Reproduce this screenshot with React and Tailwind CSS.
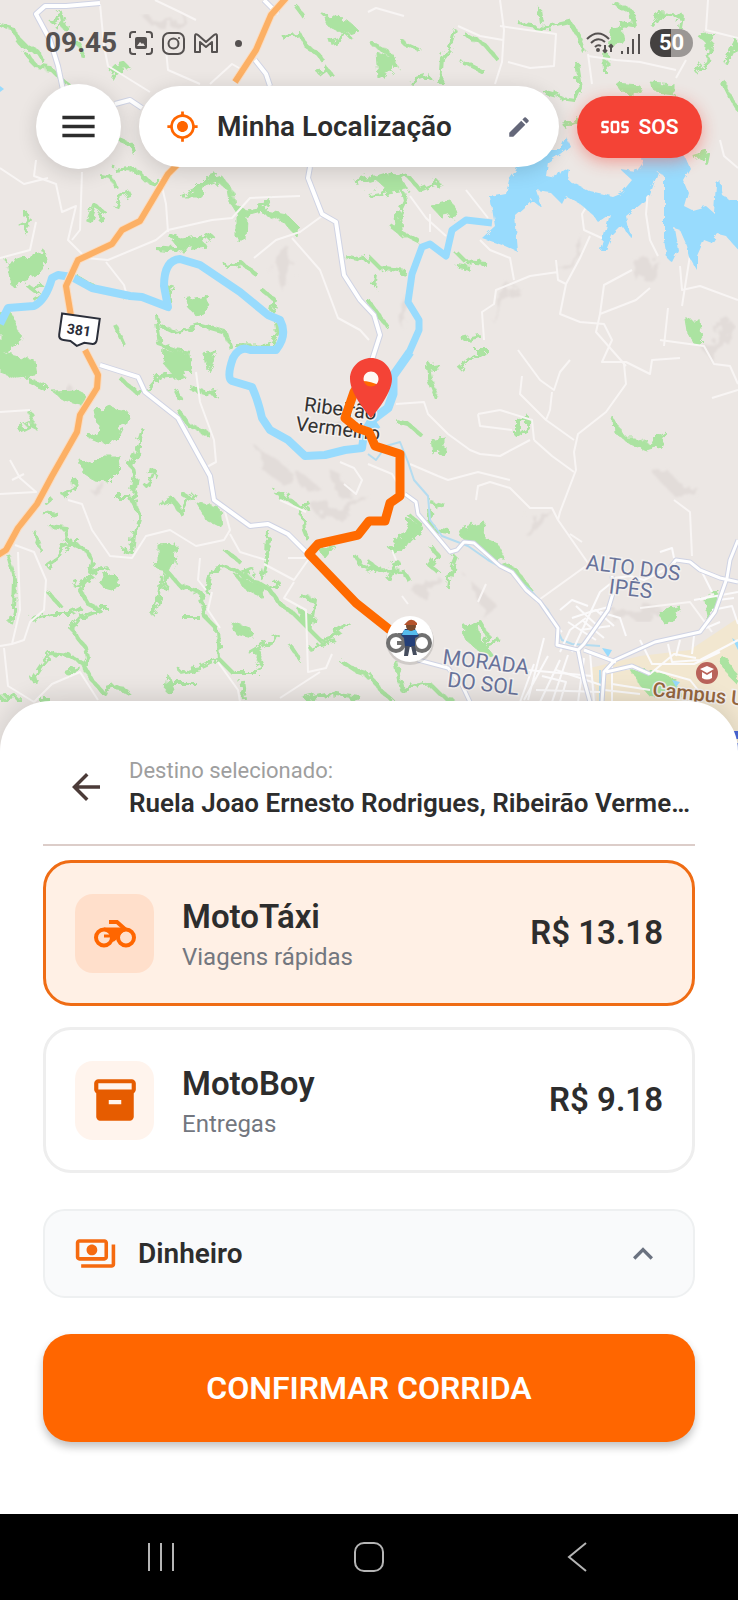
import { useState } from "react";
import {
  MdArrowBack,
  MdEdit,
  MdInventory2,
  MdKeyboardArrowUp,
  MdMenu,
  MdMyLocation,
  MdOutlinePayments,
  MdSos,
} from "react-icons/md";

const rides = [
  { id: "taxi", name: "MotoTáxi", detail: "Viagens rápidas", price: "R$ 13.18" },
  { id: "boy", name: "MotoBoy", detail: "Entregas", price: "R$ 9.18" },
];

// Thin hedges and tree lines
const woods = [
  "M0 25L12 28L18 38L26 46L38 52L44 62M17 40L24 48",
  "M25 52L36 66L50 68L60 78L68 84M36 66L30 60M50 22L62 14L64 22L58 30M62 22L66 30M78 42L84 58",
  "M110 72L116 66L124 64L130 70M118 66L114 80M120 140L132 145L136 155M100 176L112 178L116 188",
  "M114 170L128 168L140 172L145 180L156 184L160 178M118 198L130 192M116 208L120 198M88 222L94 205L104 212L98 220M26 212L28 235M20 226L32 220",
  "M156 248L176 250L186 240L205 240L212 234M168 234L182 240M225 266L240 262L256 274M262 290L275 300L272 312",
  "M76 276L100 290L125 296M28 286L36 292L42 284M34 300L46 292M115 325L124 345M156 315L160 345L175 350L190 352",
  "M160 325L175 332L200 325L225 332L230 348M190 310L205 295L196 305M172 285L168 300M235 345L270 346L278 335L276 322",
  "M122 380L136 392L148 390L160 376L176 374M176 390L182 402M190 388L215 395L214 388M178 410L188 425L210 435",
  "M18 430L30 424L38 428M30 412L34 424M62 495L75 488L74 478M42 512L58 514M45 504L52 498",
  "M144 430L136 455L130 465L136 475L132 500L140 515L134 535L132 552L122 550M114 496L130 496",
  "M146 470L156 472L152 482L146 488M160 505L172 500L182 514L194 492M172 498L180 508M204 508L220 516M182 494L192 500",
  "M275 492L290 500L302 510L311 504M302 510L304 530L308 540M280 500L288 492",
  "M50 526L66 528L68 542L86 550L92 560L90 572L108 568M68 542L60 556L46 566M68 542L80 542",
  "M92 575L80 590L88 604L100 610L80 618L70 630M88 580L74 586M100 608L108 608",
  "M35 532L42 552M8 555L15 580L14 610L11 624M48 592L60 606M32 620L50 614L70 614L82 608",
  "M72 628L76 636L86 648L88 658L84 666L92 680L104 694M84 664L70 656L50 654L42 664L34 676L36 684M104 690L116 686L130 694M66 674L80 668",
  "M155 565L168 572L164 590M162 576L158 602L153 616M168 572L180 586L200 592L206 618L218 630L220 660L232 672L258 672",
  "M206 592L212 570L225 566L250 578L270 590L280 604L292 612L310 630L320 640L332 636L350 624M218 660L200 668L180 672",
  "M182 618L200 618M256 650L262 664L258 670M250 654L280 636M268 530L267 560L262 580M270 588L280 582M310 628L315 600L300 596M240 576L255 570M225 550L240 562",
  "M290 645L300 660M308 648L320 644L336 640M340 660L358 672L370 676M305 700L330 694L360 698M170 684L196 684M242 680L245 700M0 700L20 698M38 700L50 700",
  "M355 555L360 565L369 568M428 362L432 385L438 400M426 368L440 366M458 368L475 355L485 352M396 421L408 424L422 436",
  "M518 420L528 418L528 428L518 436L518 420M430 502L445 506M408 514L420 524M430 510L432 530L450 532",
  "M430 545L438 556L430 566L440 574M456 556L450 572L448 588M368 562L380 570L404 572L410 582M368 572L380 566M388 580L398 560",
  "M464 628L480 622L488 636L480 650L500 640M368 672L380 690L392 700M396 662L402 690L430 684L440 694L455 702M660 616L680 608",
  "M612 2L632 12L634 26L620 24M652 26L660 14L682 16L680 28M520 24L544 28L570 22L578 36L584 52M540 10L542 24",
  "M576 62L580 88L575 100L560 98M545 92L560 96M606 52L607 74M700 36L710 44L708 62L695 72M722 80L732 100L738 110M726 64L738 40",
  "M456 30L450 48L442 58L440 84M464 34L485 45L496 58M460 60L484 72M372 44L390 54L398 70M402 42L420 50M410 82L430 76",
  "M368 180L385 175L410 178L420 190L440 182M400 178L405 200L398 215L400 232L420 242M390 225L402 235M368 195L395 190",
  "M368 256L380 268L406 272M376 275L374 288M368 300L386 325M456 252L466 262L486 264M458 266L470 268M462 340L480 336M474 350L488 350M563 126L580 120",
  "M296 6L305 18M283 38L300 34L306 46L318 54L324 62M318 74L326 68L334 78M330 42L350 35M345 256L370 262M355 182L370 178M694 158L708 154L706 164",
];

// Closed wooded areas
const groves = [
  "M8 262L44 250L47 264L36 276L12 286Z",
  "M0 314L10 312L16 326L22 338L10 352L0 354Z",
  "M0 353L34 360L36 376L18 378L0 372Z",
  "M28 378L48 386L44 390L30 384Z",
  "M52 391L78 390L86 396L82 406L66 402Z",
  "M165 350L190 355L192 372L176 378L164 364Z",
  "M205 355L218 350L207 370Z",
  "M96 412L108 404L116 410L128 412L124 424L118 436L112 444L98 442L88 438L100 430Z",
  "M80 460L92 464L104 456L120 456L122 468L108 482L94 480L82 472Z",
  "M196 502L220 508L222 528L206 520Z",
  "M98 580L112 572L120 580L112 590L104 588Z",
  "M158 545L176 544L174 562L168 574L158 568Z",
  "M318 548L335 546L325 558Z",
  "M232 622L250 628L252 638L236 634Z",
  "M168 674L174 690L166 692Z",
  "M234 574L262 586L264 598L246 590Z",
  "M298 608L314 616L312 630L302 620Z",
  "M230 202L228 190L218 182L206 186L204 196L180 196L194 190L206 178L220 174L232 190L234 204L246 210L258 208L272 196L262 212L240 218Z",
  "M258 208L285 213L298 226L296 236L284 222L264 214Z",
  "M236 216L246 216L245 240L236 240Z",
  "M172 240L200 234L206 246L180 250Z",
  "M186 300L204 296L210 306L196 316Z",
  "M376 52L396 58L392 72L378 78Z",
  "M430 205L450 200L458 214L442 218Z",
  "M372 176L400 176L408 190L390 192Z",
  "M612 28L622 26L624 44L608 46Z",
  "M616 84L640 86L642 94L622 92Z",
  "M650 82L674 84L674 94L656 92Z",
  "M324 16L345 18L358 30L344 34L328 26Z",
  "M686 320L700 320L702 340L696 346L688 332Z",
  "M432 438L444 436L444 450L434 456Z",
  "M613 417L620 430L626 438L634 438L650 444L660 436L666 432L660 446L646 450L630 444L614 432Z",
  "M410 520L424 528L410 540L402 552L390 550L398 540Z",
  "M460 530L485 522L484 538L498 544L504 558L492 558L476 546L462 538Z",
  "M498 562L516 568L534 592L526 590L512 574Z",
  "M462 632L476 620L480 640L496 658L480 652L466 640Z",
  "M660 612L680 606L676 618L664 624Z",
  "M704 600L718 590L716 612L708 620Z",
  "M700 36L716 34L708 44Z",
];

const hills = [
  "M140 14L170 20L190 14L186 24L150 24Z",
  "M250 440L262 450L290 470L284 486L262 470Z",
  "M290 466L306 476L322 490L306 492L296 480Z",
  "M330 470L346 480L352 500L336 494Z",
  "M310 504L340 506L369 496L350 516L320 518Z",
  "M272 252L288 246L296 268L282 290L274 276Z",
  "M330 420L348 426L340 436L322 430Z",
  "M498 290L520 288L500 306L488 318L496 302Z",
  "M575 240L584 236L570 270L562 276Z",
  "M640 264L660 262L650 280L636 282Z",
  "M656 476L672 474L680 484L696 486L694 494L670 492Z",
  "M530 518L550 506L542 528L526 536Z",
  "M410 590L438 576L444 582L424 598Z",
  "M610 610L660 606L650 620L614 622Z",
  "M690 330L704 350L728 318L736 326L712 362Z",
  "M66 398L78 402L70 384Z",
  "M84 484L110 486L108 494L92 492Z",
  "M470 580L494 602L486 622L482 606Z",
  "M396 312L408 298L404 330Z",
];

const lanes = [
  "M100 4L104 46L108 66L150 92M155 0L180 12L196 20M166 50L168 70L200 84M210 84L232 64L246 72",
  "M36 160L34 176L56 184L62 212L76 206L68 240L86 258M0 168L24 184L48 178M82 172L80 230L72 240",
  "M0 258L30 250L36 222M86 258L108 260L156 240L168 230L212 220L232 218L250 198L300 196M106 262L124 285L128 300",
  "M160 178L166 204L168 232M254 258L276 240L300 232L322 216M292 238L320 270L338 318L360 330L369 340",
  "M196 372L200 402L214 440L216 462L205 468M0 412L30 410M10 460L20 478L36 492L0 494M24 474L12 480",
  "M68 500L82 504L92 530L110 556L132 558L146 536L170 530L196 546L224 540L230 530L224 508",
  "M15 545L34 552L46 580L44 610L30 622L24 640L12 644L0 646M18 552L20 610L12 644M4 648L8 686L34 702M34 702L52 684L80 672L98 700",
  "M230 534L240 552L266 560M264 564L294 580L308 560M288 558L306 558M200 558L198 580L206 590M212 592L208 610L220 628M218 662L238 690L240 702M280 500L306 512M294 582L284 598L306 610L308 672L326 668L332 654M320 672L280 698",
  "M368 12L376 8L404 16M458 26L480 36L503 40M500 0L504 30L502 62L495 84M508 62L530 68L554 66L556 34L500 26",
  "M588 54L592 84M588 56L616 60L640 62L676 70M708 0L706 30L738 38M676 78L686 60M720 140L724 156L738 168",
  "M410 196L426 218L446 236M430 214L430 232M480 240L490 250L510 258L514 280M466 190L488 218",
  "M556 260L558 280L566 284L580 258L590 236M558 272L530 276L496 290L494 304L482 312L484 340M566 284L560 314L580 322L604 324L612 340L602 362L626 362L650 374L652 360L680 358",
  "M632 270L604 285L600 314L636 300L650 288M600 314L596 332L626 366M680 266L682 290L700 286L738 300M668 308L664 346M694 230L682 306",
  "M624 364L626 384L606 412L578 434L574 452L576 470L560 512L558 520L590 566M570 534L582 542M558 520L552 508L530 508L510 488L490 482L478 486L476 500",
  "M396 404L424 402L428 414L448 434L470 450L480 454L500 456L530 440M478 414L500 410M478 414L480 426L512 430M518 350L540 380L554 390L560 372L570 360M552 392L550 410L546 420L574 440M546 420L520 394L522 376",
  "M410 464L438 476L448 480L478 472L510 480M534 440L552 456L574 472M674 500L690 512L692 556M500 410L532 420L534 440",
  "M738 384L730 366L714 364L704 346L660 340M712 398L738 390M536 602L586 566M478 602L486 584",
  "M368 464L392 474L398 484M396 560L392 550M402 596L408 604M700 600L714 594M640 608L690 602L712 632",
  "M340 462L354 468L362 480L356 494L344 484M588 204L582 214L584 230L606 240M648 190L646 214L650 240L658 256",
];

const streets = [
  "M572 652L600 592L610 584M590 652L594 702M568 655L552 702M560 660L540 702M612 662L612 702M534 664L520 702M544 638L528 700M528 670L592 676M548 656L524 700M560 652L570 630L586 618M596 640L568 622M600 628L576 606M590 612L612 606M606 672L632 668L650 674L674 654L696 658M640 640L652 664L694 664L720 652M668 644L672 662L700 660L738 640M654 670L690 680L698 690M680 640L676 656M694 636L692 654M706 628L720 622M712 610L732 606L738 624M718 600L734 598M604 690L640 694M612 684L650 690M560 610L572 600L588 606M562 632L552 622M600 612L620 618L626 636",
  "M614 578L630 576L644 580L672 566M660 552L672 548L674 558M700 568L712 592M580 630L610 626M582 620L604 638M572 618L596 610L614 626M542 676L566 682L560 702M536 690L600 692M556 670L604 686M584 658L578 702M694 600L738 592",
];

const highway =
  "M286 -2L271 15L256 50L235 82M182 160L168 174L140 221L122 230L112 244L78 260L66 286L71 316M85 350L98 375L97 388L80 415L77 432L52 476L37 504L18 528L6 550L-2 555";

const mainRoads =
  "M100 3L66 6L45 6L36 14L50 40L58 66L63 90M115 104L130 100L142 108M255 60L266 74L270 86M310 167L308 178L322 214L336 222L344 275L360 300L374 315L380 335L372 360M100 365L138 377L145 392L178 418L200 458L210 476L214 500L250 526L268 524L288 534L306 552M264 0L278 14";

const avenues =
  "M405 494L416 502L418 514L430 528L450 552L457 550L464 542L474 543L500 566L512 572L526 590L540 602L558 628L557 645L578 650L584 644L608 610L614 590L612 576M418 660L448 668L462 685L470 702M738 540L730 560L727 578L715 612L700 632L655 642L615 660L604 672L602 702M738 582L720 578L700 570L690 562L676 560L668 570M578 650L584 680L590 702M584 650L616 662M606 672L632 666L650 674";

const Motorcycle = ({ className }) => (
  <svg viewBox="0 0 42 29" className={className} aria-hidden="true">
    <g fill="none" stroke="currentColor" strokeWidth="4">
      <circle cx="10" cy="18.5" r="8" />
      <circle cx="32" cy="18.5" r="8" />
      <path d="M15 3h8l9 8" />
    </g>
    <path
      d="M10 8.5h19l2 3c-3 2-5 4-6 7l-5 4h-3.500c1-2 .5-3 0-4H10v-3h7c-1-2.500-4-4-7-4z"
      fill="currentColor"
    />
  </svg>
);

const MapView = () => (
  <svg
    viewBox="0 0 738 752"
    preserveAspectRatio="xMidYMin slice"
    className="absolute inset-0 h-full w-full font-[Roboto,sans-serif]"
    role="img"
    aria-label="Mapa da corrida"
  >
    <defs>
      <filter id="rough" x="0" y="0" width="100%" height="100%">
        <feTurbulence type="fractalNoise" baseFrequency="0.12" numOctaves="3" seed="4" />
        <feDisplacementMap in="SourceGraphic" scale="11" />
      </filter>
      <filter id="shore" x="0" y="0" width="100%" height="100%">
        <feTurbulence type="fractalNoise" baseFrequency="0.15" numOctaves="2" seed="2" />
        <feDisplacementMap in="SourceGraphic" scale="6" />
      </filter>
      <filter id="soft" x="0" y="0" width="100%" height="100%">
        <feTurbulence type="fractalNoise" baseFrequency="0.06" numOctaves="3" seed="9" />
        <feDisplacementMap in="SourceGraphic" scale="26" />
        <feGaussianBlur stdDeviation="1" />
      </filter>
    </defs>

    <rect width="738" height="752" fill="#ece7e4" />
    <path d="M590 668L640 656L690 650L738 618V752H600L596 690Z" fill="#f2e7d0" />

    <g filter="url(#soft)" fill="#e2dcd9">
      {hills.map((d) => (
        <path key={d} d={d} />
      ))}
    </g>

    <g filter="url(#rough)" fill="#abe3a1" stroke="#abe3a1" strokeWidth="4" strokeLinejoin="round">
      {woods.map((d) => (
        <path key={d} d={d} fill="none" />
      ))}
      {groves.map((d) => (
        <path key={d} d={d} strokeWidth="1" />
      ))}
      <path d="M632 668L650 672L674 680L680 696L650 694L640 682Z" />
      <path d="M722 658L730 672L738 680" fill="none" strokeWidth="8" />
    </g>

    <g fill="none" stroke="#f8f5f4" strokeWidth="2" strokeLinejoin="round">
      {lanes.map((d) => (
        <path key={d} d={d} />
      ))}
    </g>

    {/* Rivers and lake */}
    <g fill="none" stroke="#98dbfd" strokeLinejoin="round">
      <path
        strokeWidth="8"
        d="M0 324L8 308L34 306Q46 300 52 278L58 275L72 277L92 288L130 296L142 297L168 307L164 286Q164 260 180 259L200 265L240 292L268 315L280 320Q288 335 276 350L250 350Q240 345 233 358Q226 378 232 381L252 387Q258 400 262 418L270 430L288 440L305 456L325 455L345 450L362 448L364 434L378 424"
      />
      <path strokeWidth="9" d="M364 434L372 420L388 408L393 394V376L410 352" />
      <path strokeWidth="7" d="M408 355L419 330V320L408 302L412 274L422 247L430 244L446 256L452 230L466 220L492 223" />
      <path
        strokeWidth="2"
        stroke="#b4dcf0"
        d="M368 454L376 460L386 446L400 442L408 462L414 480L428 496L430 520L442 536L468 546L488 560L510 572L532 592L548 610L562 640L572 644L600 646M600 702V670"
      />
    </g>
    <path
      filter="url(#shore)"
      fill="#98dbfd"
      d="M490 197L506 194L509 180L516 170L524 150H560L566 136L570 146L560 154L548 162L546 176L556 178L562 168L570 170L568 180L590 191L612 196L622 192L632 180L621 170L636 172L642 164L640 150H682L690 168L683 180L688 192L684 206L692 210L706 206L714 213L716 184L720 180L723 196L730 200H742V254L726 236L718 234L712 243L704 240L697 256V270L690 258L687 246L680 230L674 228L678 250L672 262L667 258L664 240V176L658 172L650 195L640 205L626 216L631 238L622 226L612 236L606 250H600L610 214L598 222L592 214L580 204L566 196L562 204L550 192L536 190L542 208L532 200L515 215L518 252L505 246L482 238L495 226Z"
    />
    <path
      fill="#98dbfd"
      d="M0 86L4 89L0 92ZM602 648L612 650L608 657ZM732 638L738 642V650ZM672 680L680 682L676 687Z"
    />

    {/* Roads */}
    <g fill="none" strokeLinejoin="round">
      {streets.map((d) => (
        <path key={d} d={d} stroke="#fbfafb" strokeWidth="2" />
      ))}
      <path d={mainRoads} stroke="#cfd3e4" strokeWidth="6" />
      <path d={mainRoads} stroke="#ffffff" strokeWidth="4" />
      <path d={avenues} stroke="#cfd3e4" strokeWidth="5" />
      <path d={avenues} stroke="#ffffff" strokeWidth="3" />
      <path d={highway} stroke="#fbdcc0" strokeWidth="8" />
      <path d={highway} stroke="#fcb065" strokeWidth="6" />
    </g>
    <path fill="#4a67d6" d="M728 731H738V739H730ZM732 743H738V752H732Z" />

    {/* Road shield */}
    <g transform="rotate(8 79 330)">
      <path
        d="M60 316H98V337Q98 342 93 342H86L79 346L72 342H65Q60 342 60 337Z"
        fill="#fff"
        stroke="#2b2f3a"
        strokeWidth="2"
      />
      <text x="79" y="335" textAnchor="middle" fontSize="14" fontWeight="700" fill="#2b2f3a">
        381
      </text>
    </g>

    {/* Place names */}
    <g stroke="#f3f0ee" strokeWidth="3" paintOrder="stroke">
      <g fill="#333333" fontSize="20" textAnchor="middle" transform="rotate(7 335 420)">
        <text x="339" y="415">Ribeirão</text>
        <text x="339" y="435">Vermelho</text>
      </g>
      <g fill="#68739a" fontSize="21" textAnchor="middle">
        <g transform="rotate(7 633 570)">
          <text x="633" y="575">ALTO DOS</text>
          <text x="633" y="596">IPÊS</text>
        </g>
        <g transform="rotate(7 485 670)">
          <text x="485" y="669">MORADA</text>
          <text x="485" y="691">DO SOL</text>
        </g>
      </g>
      <text x="652" y="696" fill="#96673f" fontSize="20" fontWeight="500" transform="rotate(6 652 696)">
        Campus Uf
      </text>
    </g>
    <circle cx="707" cy="673" r="11" fill="#b9635a" />
    <path d="M707 666L714 669L707 673L700 669Z" fill="#fff" />
    <path d="M702 672V678Q707 681 712 678V672L707 675Z" fill="#fff" />

    {/* Route and destination pin */}
    <path
      d="M371 380L362 380L354 392L345 418L357 428L369 432L375 446L400 454V496L390 503L385 521L369 521L358 535L318 544L309 554L356 603L390 630"
      fill="none"
      stroke="#ff6a00"
      strokeWidth="9"
      strokeLinejoin="round"
    />
    <circle cx="371" cy="379" r="8" fill="#fff8f4" />
    <path d="M362 381Q371 381 380 386V390H362Z" fill="#ff6a00" />
    <path
      transform="translate(335 352) scale(3)"
      fillRule="evenodd"
      d="M12 2C8.130 2 5 5.130 5 9c0 5.250 7 13 7 13s7-7.750 7-13c0-3.870-3.130-7-7-7zm0 9.500c-1.380 0-2.500-1.120-2.500-2.500s1.120-2.500 2.500-2.500 2.500 1.120 2.500 2.500-1.120 2.500-2.500 2.500z"
      fill="#f44336"
    />

    {/* Driver marker */}
    <circle cx="410" cy="641" r="24" fill="#000" opacity="0.12" />
    <circle cx="410" cy="639" r="23" fill="#fff" />
    <g fill="none" stroke="#707070" strokeWidth="4">
      <circle cx="396" cy="643" r="8" />
      <circle cx="422" cy="643" r="8" />
      <path d="M397 643H406M398 635H414" />
    </g>
    <path d="M401 635L405 629H415L419 636L415 638V647H405L404 638Z" fill="#233f78" />
    <path d="M404 630H416L418 635H402Z" fill="#56bdee" />
    <path d="M405 646H410L408 656H404ZM411 646H415L417 655H413Z" fill="#454d5e" />
    <circle cx="411" cy="626" r="5" fill="#7a4a2c" />
    <path d="M405 624Q411 616 417 623L417 625H404Z" fill="#b4532c" />
  </svg>
);

const StatusBar = () => (
  <div className="flex h-7 items-center justify-between text-[#555150]">
    <div className="flex items-center gap-3">
      <span className="text-[28px] leading-7 font-bold">09:45</span>
      <div className="flex items-center gap-2">
        <svg viewBox="0 0 24 24" className="size-6" fill="none" stroke="currentColor" strokeWidth="2" aria-hidden="true">
          <path d="M1 7V4Q1 1 4 1H7M17 1H20Q23 1 23 4V7M23 17V20Q23 23 20 23H17M7 23H4Q1 23 1 20V17" />
          <rect x="6" y="6" width="12" height="12" rx="2" fill="currentColor" stroke="none" />
          <path d="M8 15L11 11L13 13L14 12L16 15Z" fill="#ece7e4" stroke="none" />
        </svg>
        <svg viewBox="0 0 24 24" className="size-6" fill="none" stroke="currentColor" strokeWidth="2" aria-hidden="true">
          <rect x="2" y="2" width="21" height="21" rx="6" />
          <circle cx="12.500" cy="12.500" r="5" />
          <circle cx="18" cy="7" r="1" fill="currentColor" stroke="none" />
        </svg>
        <svg viewBox="0 0 26 24" className="h-6 w-[26px]" fill="none" stroke="currentColor" strokeWidth="2" strokeLinejoin="round" aria-hidden="true">
          <path d="M2 21V5Q2 2 5 4L13 11L21 4Q24 2 24 5V21H19V11L13 16L7 11V21Z" />
        </svg>
      </div>
      <span className="ml-1 size-[7px] rounded-full bg-current" />
    </div>
    <div className="flex items-center gap-[10px]">
      <div className="flex items-end gap-[7px]">
        <svg viewBox="0 0 28 22" className="h-[22px] w-7" fill="none" stroke="currentColor" strokeWidth="2" aria-hidden="true">
          <path d="M1 7Q12 -4 23 7M5 11Q12 4 19 10M9 15Q12 12 15 14" />
          <circle cx="12" cy="18" r="1" fill="currentColor" />
          <path d="M19 13V20M17 18L19 20L21 18M25 20V13M23 15L25 13L27 15" />
        </svg>
        <svg viewBox="0 0 19 20" className="h-5 w-[19px]" fill="none" stroke="currentColor" strokeWidth="2" aria-hidden="true">
          <path d="M1 17V20M7 13V20M12 5V20M18 0V20" />
        </svg>
      </div>
      <span className="flex h-7 w-[43px] items-center justify-center rounded-full bg-linear-to-r from-[#444140] from-50% to-[#9b9795] to-50% text-[22px] leading-7 font-bold text-white">
        50
      </span>
    </div>
  </div>
);

const RideOption = ({ ride, selected, onSelect }) => (
  <button
    type="button"
    aria-pressed={selected}
    onClick={onSelect}
    className={`flex w-full items-center rounded-[28px] border-[3px] px-[29px] py-[30px] text-left ${
      selected ? "border-[#ef6c14] bg-[#fff0e5]" : "border-[#eeeeee] bg-white"
    }`}
  >
    <span
      className={`flex size-[79px] shrink-0 items-center justify-center rounded-[18px] ${
        selected ? "bg-[#ffdfcb]" : "bg-[#fff4ed]"
      }`}
    >
      {ride.id === "taxi" ? (
        <Motorcycle className="w-[42px] text-[#ff6600]" />
      ) : (
        <MdInventory2 className="size-[50px] text-[#e65c00]" />
      )}
    </span>
    <span className="ml-7 flex flex-1 flex-col gap-1 pt-1">
      <span className="text-[33px] leading-10 font-semibold">{ride.name}</span>
      <span className="text-[24px] leading-8 text-[#73777f]">{ride.detail}</span>
    </span>
    <span className="text-[33px] leading-10 font-semibold">{ride.price}</span>
  </button>
);

const App = () => {
  const [selected, setSelected] = useState("taxi");

  return (
    <div className="flex min-h-screen flex-col bg-white font-[Roboto,sans-serif] text-[#2d2d2d]">
      {/* Map */}
      <div className="relative min-h-[400px] flex-1 overflow-hidden">
        <MapView />
        <div className="relative pt-[29px]">
          <div className="px-[45px]">
            <StatusBar />
          </div>
          <div className="mt-[27px] flex items-center gap-[18px] px-9">
            <button
              type="button"
              aria-label="Menu"
              className="flex size-[85px] shrink-0 items-center justify-center rounded-full bg-white shadow-[0_4px_20px_rgba(0,0,0,0.14)]"
            >
              <MdMenu className="size-[43px]" />
            </button>
            <button
              type="button"
              className="flex h-[81px] min-w-0 flex-1 items-center rounded-full bg-white px-[27px] shadow-[0_4px_20px_rgba(0,0,0,0.14)]"
            >
              <MdMyLocation className="size-[33px] shrink-0 text-[#ff6600]" />
              <span className="ml-[18px] flex-1 truncate text-left text-[28px] leading-9 font-semibold">
                Minha Localização
              </span>
              <MdEdit className="size-[26px] shrink-0 text-[#646779]" />
            </button>
            <button
              type="button"
              className="flex h-[62px] w-[125px] shrink-0 items-center justify-center gap-2 rounded-full bg-[#f44336] text-white shadow-[0_4px_16px_rgba(244,67,54,0.45)]"
            >
              <MdSos className="size-[30px]" />
              <span className="text-[21px] leading-7 font-semibold">SOS</span>
            </button>
          </div>
        </div>
      </div>

      {/* Ride sheet */}
      <div className="relative -mt-[50px] rounded-t-[50px] bg-white px-[43px] pt-[54px] pb-[72px] shadow-[0_-4px_24px_rgba(0,0,0,0.12)]">
        <div className="flex items-center border-b-2 border-[#dccdc9] pb-[25px]">
          <button type="button" aria-label="Voltar" className="ml-[22px] shrink-0">
            <MdArrowBack className="size-[42px] text-[#4b3b38]" />
          </button>
          <div className="ml-[22px] min-w-0 flex-1">
            <p className="text-[22px] leading-8 text-[#9e9e9e]">Destino selecionado:</p>
            <p className="truncate text-[26px] leading-8 font-semibold">
              Ruela Joao Ernesto Rodrigues, Ribeirão Vermelho - MG
            </p>
          </div>
        </div>

        <div className="mt-[14px] flex flex-col gap-[21px]">
          {rides.map((ride) => (
            <RideOption
              key={ride.id}
              ride={ride}
              selected={selected === ride.id}
              onSelect={() => setSelected(ride.id)}
            />
          ))}
        </div>

        <button
          type="button"
          className="mt-9 flex h-[89px] w-full items-center rounded-[22px] border-2 border-[#eef0f1] bg-[#f9fafb] pr-[30px] pl-[29px]"
        >
          <MdOutlinePayments className="size-[43px] shrink-0 text-[#f56a10]" />
          <span className="ml-[21px] flex-1 text-left text-[28px] leading-9 font-semibold">
            Dinheiro
          </span>
          <MdKeyboardArrowUp className="size-10 shrink-0 text-[#6b7280]" />
        </button>

        <button
          type="button"
          className="mt-9 flex h-[108px] w-full items-center justify-center rounded-[28px] bg-[#ff6600] text-[32px] leading-10 font-semibold text-white shadow-[0_5px_8px_rgba(0,0,0,0.24)]"
        >
          CONFIRMAR CORRIDA
        </button>
      </div>

      {/* System navigation */}
      <nav className="flex h-[86px] items-center bg-black px-[57px] text-[#b5b5b5]">
        <button type="button" aria-label="Recentes" className="flex flex-1 justify-center">
          <svg viewBox="0 0 30 30" className="size-[30px]" fill="none" stroke="currentColor" strokeWidth="2">
            <path d="M3 1V29M15 1V29M27 1V29" />
          </svg>
        </button>
        <button type="button" aria-label="Início" className="flex flex-1 justify-center">
          <svg viewBox="0 0 30 30" className="size-[30px]" fill="none" stroke="currentColor" strokeWidth="2">
            <rect x="1" y="1" width="28" height="28" rx="9" />
          </svg>
        </button>
        <button type="button" aria-label="Voltar ao app anterior" className="flex flex-1 justify-center">
          <svg viewBox="0 0 30 30" className="size-[30px]" fill="none" stroke="currentColor" strokeWidth="2">
            <path d="M24 1L7 15L24 29" />
          </svg>
        </button>
      </nav>
    </div>
  );
};

export default App;
